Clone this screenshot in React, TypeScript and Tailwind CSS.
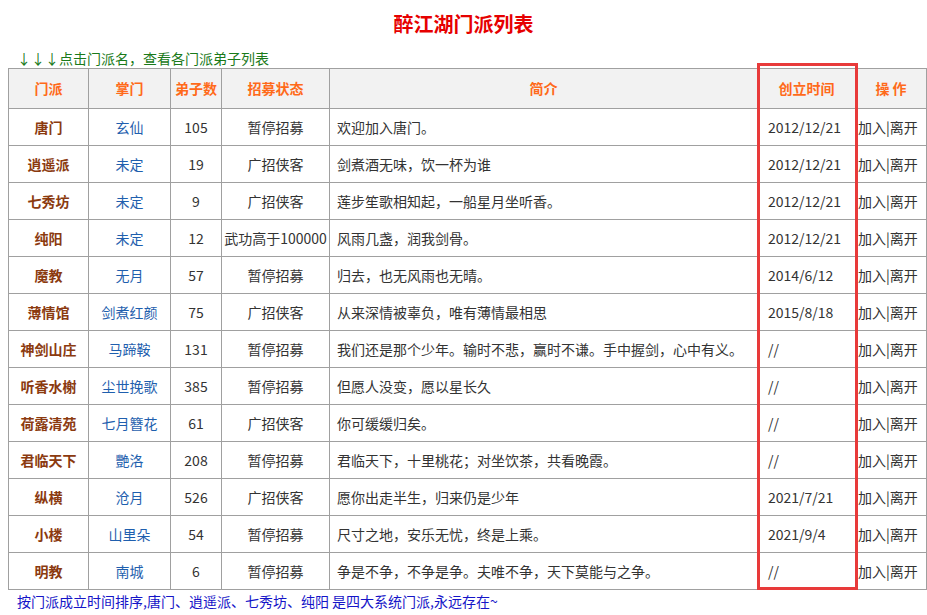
const rows: [string, string, string, string, string, string][] = [
  ['唐门', '玄仙', '105', '暂停招募', '欢迎加入唐门。', '2012/12/21'],
  ['逍遥派', '未定', '19', '广招侠客', '剑煮酒无味，饮一杯为谁', '2012/12/21'],
  ['七秀坊', '未定', '9', '广招侠客', '莲步笙歌相知起，一船星月坐听香。', '2012/12/21'],
  ['纯阳', '未定', '12', '武功高于100000', '风雨几盏，润我剑骨。', '2012/12/21'],
  ['魔教', '无月', '57', '暂停招募', '归去，也无风雨也无晴。', '2014/6/12'],
  ['薄情馆', '剑煮红颜', '75', '广招侠客', '从来深情被辜负，唯有薄情最相思', '2015/8/18'],
  ['神剑山庄', '马蹄鞍', '131', '暂停招募', '我们还是那个少年。输时不悲，赢时不谦。手中握剑，心中有义。', '//'],
  ['听香水榭', '尘世挽歌', '385', '暂停招募', '但愿人没变，愿以星长久', '//'],
  ['荷露清苑', '七月簪花', '61', '广招侠客', '你可缓缓归矣。', '//'],
  ['君临天下', '艷洛', '208', '暂停招募', '君临天下，十里桃花；对坐饮茶，共看晚霞。', '//'],
  ['纵横', '沧月', '526', '广招侠客', '愿你出走半生，归来仍是少年', '2021/7/21'],
  ['小楼', '山里朵', '54', '暂停招募', '尺寸之地，安乐无忧，终是上乘。', '2021/9/4'],
  ['明教', '南城', '6', '暂停招募', '争是不争，不争是争。夫唯不争，天下莫能与之争。', '//'],
];

const font = { fontFamily: '"Microsoft YaHei", "Noto Sans CJK SC", "Liberation Sans", sans-serif' };
const td = 'border border-[#a0a0a0] h-[37px] px-0 text-[14px]';
const th = 'border border-[#a0a0a0] h-[40px] bg-[#f2f2f2] text-[#ff6a1a] font-bold text-[14px]';

export default function App() {
  return (
    <div className="w-[927px] h-[615px] bg-white overflow-hidden text-[#333]" style={font}>
      <h1 className="text-center text-[20px] font-bold text-[#e60000] pt-[9px] leading-[30px]">醉江湖门派列表</h1>
      <div className="px-[17px] text-[14px] text-[#1a7a1a] leading-[20px] mt-[9px]">↓↓↓点击门派名，查看各门派弟子列表</div>
      <div className="relative ml-[8px] w-[918px]">
        <table className="table-fixed border-collapse w-[918px]">
          <colgroup>
            <col className="w-[80px]" />
            <col className="w-[82px]" />
            <col className="w-[51px]" />
            <col className="w-[108px]" />
            <col className="w-[428px]" />
            <col className="w-[98px]" />
            <col className="w-[71px]" />
          </colgroup>
          <thead>
            <tr>
              <th className={th}>门派</th>
              <th className={th}>掌门</th>
              <th className={th}>弟子数</th>
              <th className={th}>招募状态</th>
              <th className={th}>简介</th>
              <th className={th}>创立时间</th>
              <th className={th}>操 作</th>
            </tr>
          </thead>
          <tbody>
            {rows.map((r) => (
              <tr key={r[0]}>
                <td className={`${td} text-center font-bold text-[#8b3a0f]`}>{r[0]}</td>
                <td className={`${td} text-center text-[#1f5fae]`}>{r[1]}</td>
                <td className={`${td} text-center`}>{r[2]}</td>
                <td className={`${td} text-center whitespace-nowrap`}>{r[3]}</td>
                <td className={`${td} pl-[7px] whitespace-nowrap`}>{r[4]}</td>
                <td className={`${td} pl-[10px]`}>{r[5]}</td>
                <td className={`${td} pl-[2px] whitespace-nowrap`}>加入|离开</td>
              </tr>
            ))}
          </tbody>
        </table>
        <div className="absolute left-[749px] top-[-5px] w-[101px] h-[527px] border-[3px] border-[#e83a3a] pointer-events-none" />
      </div>
      <div className="px-[17px] text-[14px] text-[#1515c8] leading-[20px] mt-[1px]">按门派成立时间排序,唐门、逍遥派、七秀坊、纯阳 是四大系统门派,永远存在~</div>
    </div>
  );
}
